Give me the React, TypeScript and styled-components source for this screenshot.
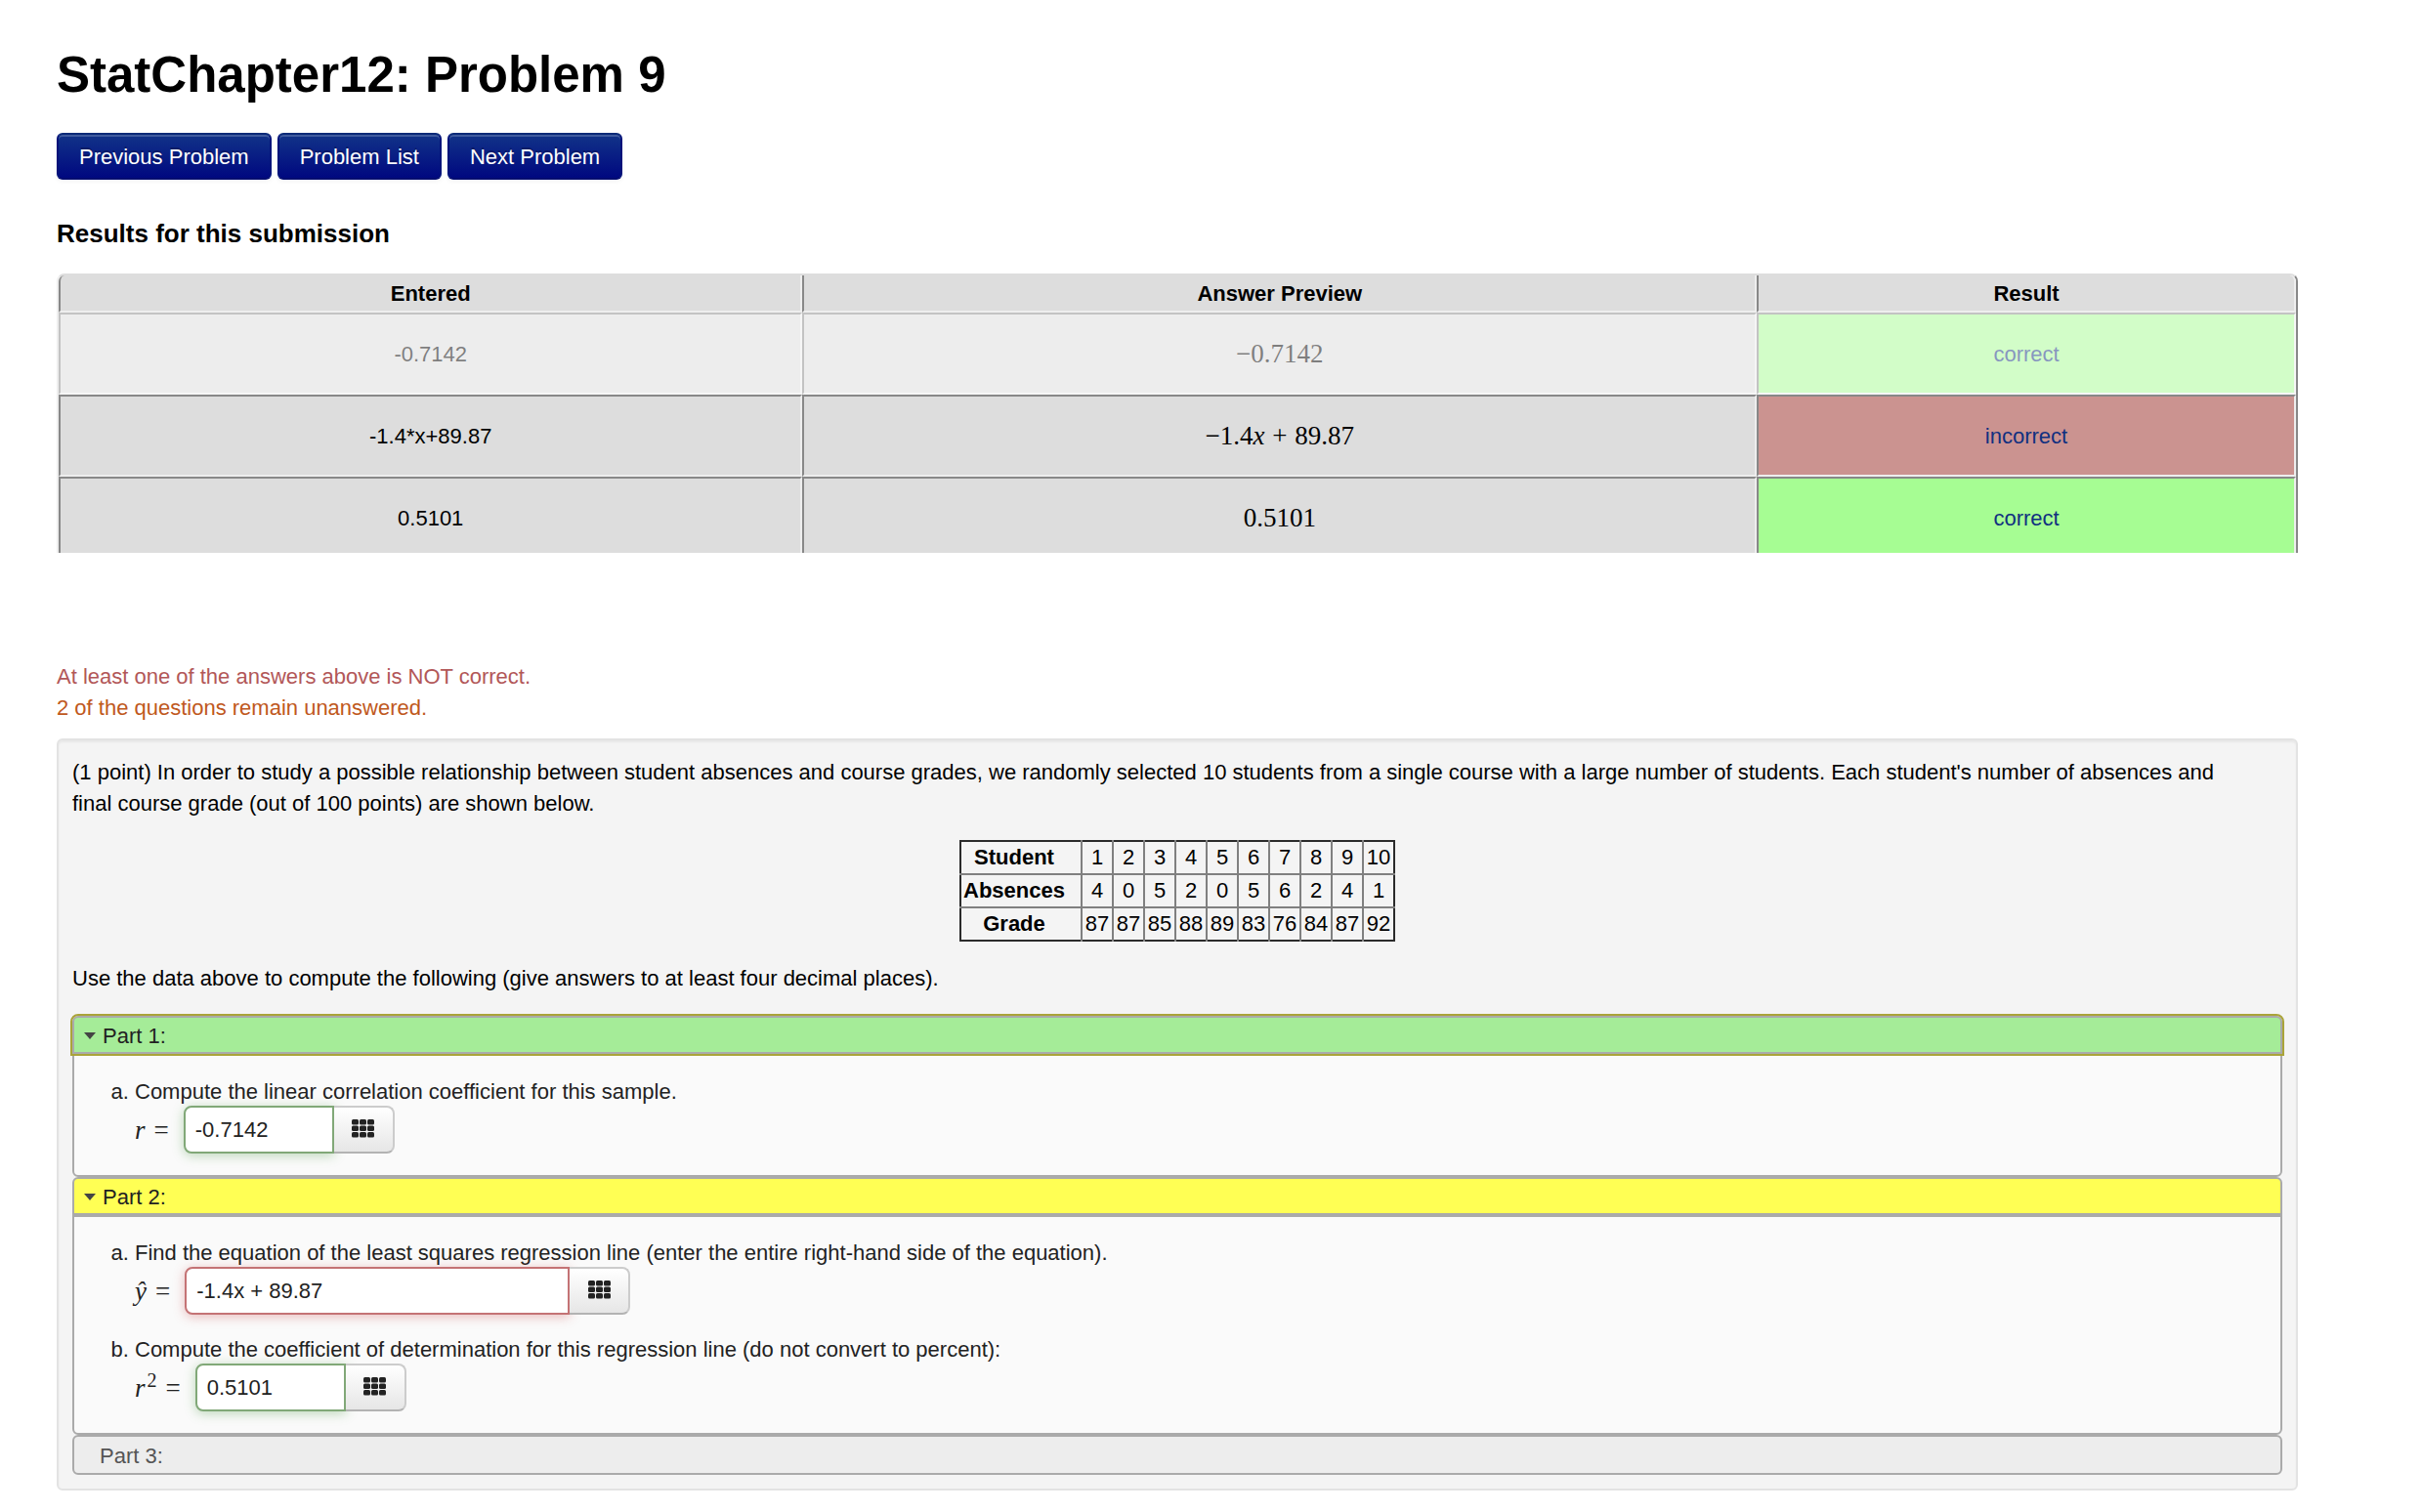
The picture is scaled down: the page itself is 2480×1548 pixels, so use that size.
import React from "react";
import styled, { createGlobalStyle } from "styled-components";

const GlobalStyle = createGlobalStyle`
  *, *::before, *::after { box-sizing: border-box; }
  body {
    margin: 0;
    background: #fff;
    color: #000;
    font-family: "Liberation Sans", Arial, Helvetica, sans-serif;
    font-size: 22px;
    line-height: 32px;
  }
`;

const Page = styled.main`
  padding: 47px 128px 22px 58px;
`;

const Title = styled.h1`
  margin: 0 0 29px;
  font-size: 51px;
  line-height: 60px;
`;

const ButtonRow = styled.nav`
  display: flex;
  gap: 6px;
  margin-bottom: 39px;
`;

const NavButton = styled.button`
  height: 48px;
  padding: 2px 21px 0;
  border: 2px solid #03137a;
  border-top-color: #0a2a78;
  border-bottom-color: #030d70;
  border-radius: 6px;
  background: linear-gradient(to bottom, #113388, #000880);
  box-shadow: inset 0 2px 0 rgba(255, 255, 255, 0.2), 0 2px 4px rgba(0, 0, 0, 0.05);
  color: #fff;
  font: inherit;
  text-shadow: 0 -2px 0 rgba(0, 0, 0, 0.25);
`;

const SectionTitle = styled.h2`
  margin: 0 0 25px;
  font-size: 26px;
  line-height: 32px;
`;

const ResultsClip = styled.div`
  height: 286px;
  overflow: hidden;
`;

const ResultsTable = styled.table`
  width: 100%;
  table-layout: fixed;
  border-collapse: separate;
  border-spacing: 0;
  border: 2px solid;
  border-color: #ddd #888 #888 #eee;
  border-radius: 8px 8px 0 0;
  text-align: center;
`;

const ResultsHead = styled.th<{ $share: number }>`
  width: ${(p) => p.$share}%;
  height: 38px;
  padding: 2px 0 0;
  border: solid;
  border-width: 0 2px 2px;
  border-color: #eee #eee #eee #888;
  background: #ddd;
  &:first-child { border-top-left-radius: 6px; }
  &:last-child { border-top-right-radius: 6px; }
`;

const ResultsRow = styled.tr<{ $faded?: boolean }>`
  opacity: ${(p) => (p.$faded ? 0.5 : 1)};
`;

const ResultsCell = styled.td<{ $fill?: string }>`
  height: 84px;
  padding: 2px 0 0;
  border: 2px solid;
  border-color: #888 #eee #eee #888;
  background: ${(p) => p.$fill ?? "#ddd"};
`;

const ResultLink = styled.a`
  color: #103080;
  text-decoration: none;
`;

const MathText = styled.span`
  font-family: "Liberation Serif", "Times New Roman", serif;
  font-size: 27px;
`;

const Operator = styled.span`
  margin: 0 1px;
`;

const Messages = styled.div`
  margin: 111px 0 15px;
`;

const Message = styled.p<{ $color: string }>`
  margin: 0;
  color: ${(p) => p.$color};
`;

const ProblemBox = styled.section`
  padding: 17px 14px 14px;
  border: 2px solid #e3e3e3;
  border-radius: 6px;
  background: #f4f4f4;
  box-shadow: inset 0 2px 2px rgba(0, 0, 0, 0.05);
`;

const Paragraph = styled.p`
  margin: 0;
  padding-right: 32px;
`;

const DataTable = styled.table`
  margin: 21px auto 22px;
  border: 2px solid #2b2b2b;
  border-collapse: collapse;
  text-align: center;
  tr + tr > * { border-top: 2px solid #808080; }
`;

const DataLabel = styled.th`
  width: 124px;
  height: 34px;
  padding: 0 16px 0 2px;
`;

const DataCell = styled.td`
  width: 32px;
  height: 34px;
  padding: 0;
  border-left: 2px solid #808080;
`;

const Parts = styled.div`
  margin-top: 22px;
  color: #222;
`;

const PartHead = styled.button<{ $fill: string; $focused?: boolean }>`
  display: flex;
  align-items: center;
  gap: 7px;
  width: 100%;
  height: 39px;
  padding: 2px 10px 0;
  border: 2px solid #aaa;
  border-radius: 6px 6px 0 0;
  outline: ${(p) => (p.$focused ? "2px solid #aaa439" : "none")};
  position: ${(p) => (p.$focused ? "relative" : "static")};
  background: ${(p) => p.$fill};
  color: inherit;
  font: inherit;
  text-align: left;
`;

const ClosedPart = styled(PartHead)`
  height: 41px;
  padding: 2px 26px 0;
  border-radius: 6px;
  color: #555;
`;

const Arrow = styled.span`
  width: 12px;
  border: 6px solid transparent;
  border-top: 7px solid #444;
  border-bottom: 0;
`;

const PartBody = styled.div`
  padding: 23px 24px 22px 62px;
  border: 2px solid #aaa;
  border-radius: 0 0 6px 6px;
  background: #fafafa;
`;

const Questions = styled.ol`
  display: grid;
  gap: 22px;
  margin: 0;
  padding: 0;
  list-style: lower-alpha;
`;

const Question = styled.li`
  line-height: 28px;
`;

const AnswerRow = styled.div`
  display: flex;
  align-items: center;
`;

const AnswerLabel = styled.label`
  display: flex;
  gap: 9px;
  margin-right: 15px;
  font-family: "Liberation Serif", "Times New Roman", serif;
  font-size: 27px;
  sup {
    margin-left: 2px;
    font-size: 20px;
    line-height: 12px;
  }
`;

const AnswerInput = styled.input<{ $wide?: boolean; $tone: string; $glow: string }>`
  width: ${(p) => (p.$wide ? 394 : 154)}px;
  height: 49px;
  padding: 0 10px;
  border: 2px solid ${(p) => p.$tone};
  border-radius: 8px 0 0 8px;
  background: #fff;
  box-shadow: 0 2px 12px ${(p) => p.$glow};
  color: #222;
  font: inherit;
  outline: none;
`;

const PadButton = styled.button`
  display: flex;
  align-items: center;
  justify-content: center;
  width: 62px;
  height: 49px;
  padding: 0 0 2px;
  border: 2px solid #ccc;
  border-bottom-color: #b3b3b3;
  border-left: 0;
  border-radius: 0 8px 8px 0;
  background: linear-gradient(to bottom, #fff, #e6e6e6);
  color: #222;
`;

const GridIcon = () => (
  <svg width="23" height="19" viewBox="0 0 46 38" fill="currentColor" aria-hidden="true">
    {[0, 13, 26].map((y) =>
      [0, 16, 32].map((x) => <rect key={`${x}-${y}`} x={x} y={y} width="14" height="11" rx="3" />)
    )}
  </svg>
);

const results = [
  { entered: "-0.7142", preview: <>−0.7142</>, result: "correct", fill: "#a6fd93", faded: true },
  {
    entered: "-1.4*x+89.87",
    preview: <>−1.4<i>x</i> <Operator>+</Operator> 89.87</>,
    result: "incorrect",
    fill: "#cb9390",
  },
  { entered: "0.5101", preview: <>0.5101</>, result: "correct", fill: "#a6fd93" },
];

const data = [
  { label: "Student", values: [1, 2, 3, 4, 5, 6, 7, 8, 9, 10] },
  { label: "Absences", values: [4, 0, 5, 2, 0, 5, 6, 2, 4, 1] },
  { label: "Grade", values: [87, 87, 85, 88, 89, 83, 76, 84, 87, 92] },
];

type AnswerProps = {
  id: string;
  symbol: React.ReactNode;
  value: string;
  correct: boolean;
  wide?: boolean;
};

const Answer = ({ id, symbol, value, correct, wide }: AnswerProps) => (
  <AnswerRow>
    <AnswerLabel htmlFor={id}>
      <span>{symbol}</span>
      <span>=</span>
    </AnswerLabel>
    <AnswerInput
      id={id}
      type="text"
      defaultValue={value}
      $wide={wide}
      $tone={correct ? "#81a878" : "#c47375"}
      $glow={correct ? "rgba(70, 150, 60, 0.35)" : "rgba(200, 70, 70, 0.35)"}
    />
    <PadButton type="button" aria-label="Open equation editor">
      <GridIcon />
    </PadButton>
  </AnswerRow>
);

export default function App() {
  return (
    <Page>
      <GlobalStyle />
      <Title>StatChapter12: Problem 9</Title>
      <ButtonRow>
        <NavButton>Previous Problem</NavButton>
        <NavButton>Problem List</NavButton>
        <NavButton>Next Problem</NavButton>
      </ButtonRow>

      <SectionTitle>Results for this submission</SectionTitle>
      <ResultsClip>
        <ResultsTable>
          <thead>
            <tr>
              <ResultsHead $share={33.25}>Entered</ResultsHead>
              <ResultsHead $share={42.65}>Answer Preview</ResultsHead>
              <ResultsHead $share={24.1}>Result</ResultsHead>
            </tr>
          </thead>
          <tbody>
            {results.map((r) => (
              <ResultsRow key={r.entered} $faded={r.faded}>
                <ResultsCell>{r.entered}</ResultsCell>
                <ResultsCell><MathText>{r.preview}</MathText></ResultsCell>
                <ResultsCell $fill={r.fill}><ResultLink href="#">{r.result}</ResultLink></ResultsCell>
              </ResultsRow>
            ))}
          </tbody>
        </ResultsTable>
      </ResultsClip>

      <Messages>
        <Message $color="#b25758">At least one of the answers above is NOT correct.</Message>
        <Message $color="#bf5820">2 of the questions remain unanswered.</Message>
      </Messages>

      <ProblemBox>
        <Paragraph>
          (1 point) In order to study a possible relationship between student absences and course grades, we
          randomly selected 10 students from a single course with a large number of students. Each student's
          number of absences and final course grade (out of 100 points) are shown below.
        </Paragraph>
        <DataTable>
          <tbody>
            {data.map((row) => (
              <tr key={row.label}>
                <DataLabel scope="row">{row.label}</DataLabel>
                {row.values.map((v, i) => (
                  <DataCell key={i}>{v}</DataCell>
                ))}
              </tr>
            ))}
          </tbody>
        </DataTable>
        <Paragraph>Use the data above to compute the following (give answers to at least four decimal places).</Paragraph>

        <Parts>
          <PartHead $fill="#a5ec98" $focused><Arrow />Part 1:</PartHead>
          <PartBody>
            <Questions>
              <Question>
                Compute the linear correlation coefficient for this sample.
                <Answer id="r" symbol={<i>r</i>} value="-0.7142" correct />
              </Question>
            </Questions>
          </PartBody>

          <PartHead $fill="#ffff54"><Arrow />Part 2:</PartHead>
          <PartBody>
            <Questions>
              <Question>
                Find the equation of the least squares regression line (enter the entire right-hand side of the equation).
                <Answer id="y-hat" symbol={<i>ŷ</i>} value="-1.4x + 89.87" correct={false} wide />
              </Question>
              <Question>
                Compute the coefficient of determination for this regression line (do not convert to percent):
                <Answer id="r-squared" symbol={<><i>r</i><sup>2</sup></>} value="0.5101" correct />
              </Question>
            </Questions>
          </PartBody>

          <ClosedPart $fill="#ededed">Part 3:</ClosedPart>
        </Parts>
      </ProblemBox>
    </Page>
  );
}
